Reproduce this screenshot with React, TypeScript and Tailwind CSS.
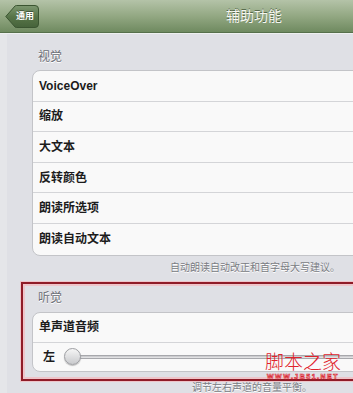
import React from 'react';

const visionRows = ['VoiceOver', '缩放', '大文本', '反转颜色', '朗读所选项', '朗读自动文本'];

function BackButton() {
  return (
    <span className="relative ml-[5px] flex h-[23px] w-[34px] items-center justify-center">
      <svg className="absolute inset-0" width="34" height="23" viewBox="0 0 34 23">
        <defs>
          <linearGradient id="bb" x1="0" y1="0" x2="0" y2="1">
            <stop offset="0" stopColor="#7d9870" />
            <stop offset="0.5" stopColor="#587549" />
            <stop offset="1" stopColor="#46633a" />
          </linearGradient>
        </defs>
        <path
          d="M0.8 11.5 L10 1 Q10.6 0.5 11.5 0.5 L30 0.5 Q33.5 0.5 33.5 4 L33.5 19 Q33.5 22.5 30 22.5 L11.5 22.5 Q10.6 22.5 10 22 Z"
          fill="url(#bb)"
          stroke="#3b5531"
          strokeWidth="1"
        />
      </svg>
      <span className="relative ml-[6px] text-[9px] font-bold leading-none text-white [text-shadow:0_-1px_0_rgba(0,0,0,0.4)]">
        通用
      </span>
    </span>
  );
}

function GroupHeader({ children, className = '' }: { children: React.ReactNode; className?: string }) {
  return (
    <div
      className={`text-[12px] leading-[16px] text-[#6b6e76] [text-shadow:0_1px_0_#ffffff] ${className}`}
    >
      {children}
    </div>
  );
}

export default function App() {
  return (
    <div
      className="relative h-[393px] w-[353px] overflow-hidden bg-[#dfe0e5]"
      style={{ fontFamily: '"Liberation Sans", "Noto Sans CJK SC", sans-serif' }}
    >
      {/* Nav bar */}
      <div className="flex h-[33px] items-center border-b border-[#56704b] bg-gradient-to-b from-[#b4c3a8] via-[#93a883] to-[#6f8a60]">
        <BackButton />
        <span className="ml-[187px] text-[14px] leading-none text-[#f6f7f2] [text-shadow:0_-1px_0_rgba(40,60,30,0.6)]">
          辅助功能
        </span>
      </div>
      <div className="h-px bg-[#eef0f0]" />

      {/* Content */}
      <div className="flex w-[420px] flex-col border-l-[7px] border-l-[#e5e6e9]">
        {/* 视觉 */}
        <GroupHeader className="pl-[31px] pt-[15px] pb-[5px]">视觉</GroupHeader>
        <div className="ml-[25px] overflow-hidden rounded-[8px] border border-[#c3c4c8] bg-[#f9f9f9]">
          {visionRows.map((label, i) => (
            <div
              key={label}
              className={`flex h-[30.6px] items-center pl-[6px] text-[12px] font-bold text-[#1c1c1c] ${
                i < visionRows.length - 1 ? 'border-b border-[#d4d5d8]' : ''
              }`}
            >
              {label}
            </div>
          ))}
        </div>
        <div className="mt-[5px] pl-[163px] text-[10px] leading-[14px] text-[#7a7c83] [text-shadow:0_1px_0_#ffffff]">
          自动朗读自动改正和首字母大写建议。
        </div>

        {/* 听觉 (highlighted) */}
        <div className="ml-[14px] mt-[7px] border-2 border-[#8f1b27] pb-[7px] pl-[9px] pt-[6px] shadow-[0_0_0_1px_#eec4c9,inset_0_0_0_2px_#eec4c9]">
          <GroupHeader className="pl-[6px] pb-[6px]">听觉</GroupHeader>
          <div className="overflow-hidden rounded-[8px] border border-[#c3c4c8] bg-[#f9f9f9]">
            <div className="flex h-[30px] items-center border-b border-[#d4d5d8] pl-[6px] text-[12px] font-bold text-[#1c1c1c]">
              单声道音频
            </div>
            <div className="flex h-[28px] items-center pl-[10px]">
              <span className="text-[12px] font-bold text-[#1c1c1c]">左</span>
              <div className="ml-[9px] flex flex-1 items-center">
                <span className="relative z-10 h-[17px] w-[17px] shrink-0 rounded-full border border-[#9d9ea2] bg-gradient-to-b from-[#f6f6f6] to-[#c9cacd] shadow-[0_1px_1px_rgba(0,0,0,0.25)]" />
                <span className="-ml-[2px] h-[4px] flex-1 rounded-full border border-[#a7a8ac] bg-gradient-to-b from-[#c2c3c6] to-[#ebebed]" />
              </div>
            </div>
          </div>
        </div>
        <div className="pl-[185px] text-[10px] leading-[14px] text-[#7a7c83] [text-shadow:0_1px_0_#ffffff]">
          调节左右声道的音量平衡。
        </div>
      </div>

      {/* Watermark */}
      <div className="absolute left-[265px] top-[350px] flex flex-col items-center">
        <span className="text-[19px] leading-[22px] text-[#e0232c]" style={{ fontFamily: '"Noto Sans CJK SC", sans-serif', fontWeight: 300 }}>
          脚本之家
        </span>
        <span className="mt-[1px] text-[7px] font-bold leading-[8px] tracking-[1.5px] text-white [-webkit-text-stroke:0.6px_#d8202a]">
          WWW.JB51.NET
        </span>
      </div>
    </div>
  );
}
